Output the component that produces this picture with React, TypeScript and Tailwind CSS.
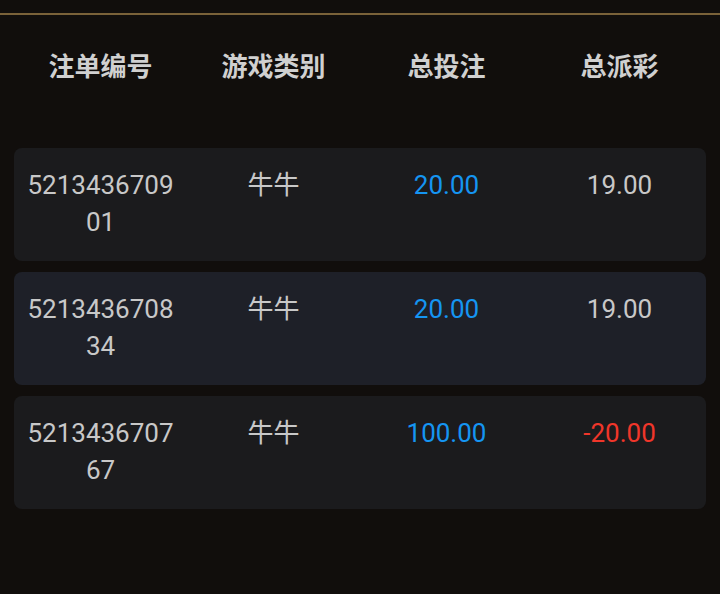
import React from "react";

const rows = [
  { id: "521343670901", game: "牛牛", bet: "20.00", win: "19.00", neg: false, bg: "bg-[#1b1b1d]" },
  { id: "521343670834", game: "牛牛", bet: "20.00", win: "19.00", neg: false, bg: "bg-[#1e2028]" },
  { id: "521343670767", game: "牛牛", bet: "100.00", win: "-20.00", neg: true, bg: "bg-[#1b1b1d]" },
];

export default function App() {
  return (
    <div
      className="w-[720px] h-[594px] bg-[#110e0c] overflow-hidden"
      style={{ fontFamily: 'Roboto, "Noto Sans CJK SC", sans-serif' }}
    >
      <div className="h-[13px]" />
      <div className="h-[2px] bg-[#7a6239]" />
      <div className="mx-[14px] grid grid-cols-4 h-[106px] pt-[34px] text-[26px] font-bold text-[#d0d0d0] leading-[36px]">
        <div className="text-center">注单编号</div>
        <div className="text-center">游戏类别</div>
        <div className="text-center">总投注</div>
        <div className="text-center">总派彩</div>
      </div>
      <div className="mt-[27px] flex flex-col gap-[11px] mx-[14px]">
        {rows.map((r) => (
          <div key={r.id} className={`${r.bg} rounded-[8px] h-[113px] grid grid-cols-4 pt-[19px] text-[26px] leading-[37px] text-[#c8c8c8]`}>
            <div className="text-center px-[10px] break-all">{r.id}</div>
            <div className="text-center">{r.game}</div>
            <div className="text-center text-[#1595f2]">{r.bet}</div>
            <div className={`text-center ${r.neg ? "text-[#f0362a]" : ""}`}>{r.win}</div>
          </div>
        ))}
      </div>
    </div>
  );
}
